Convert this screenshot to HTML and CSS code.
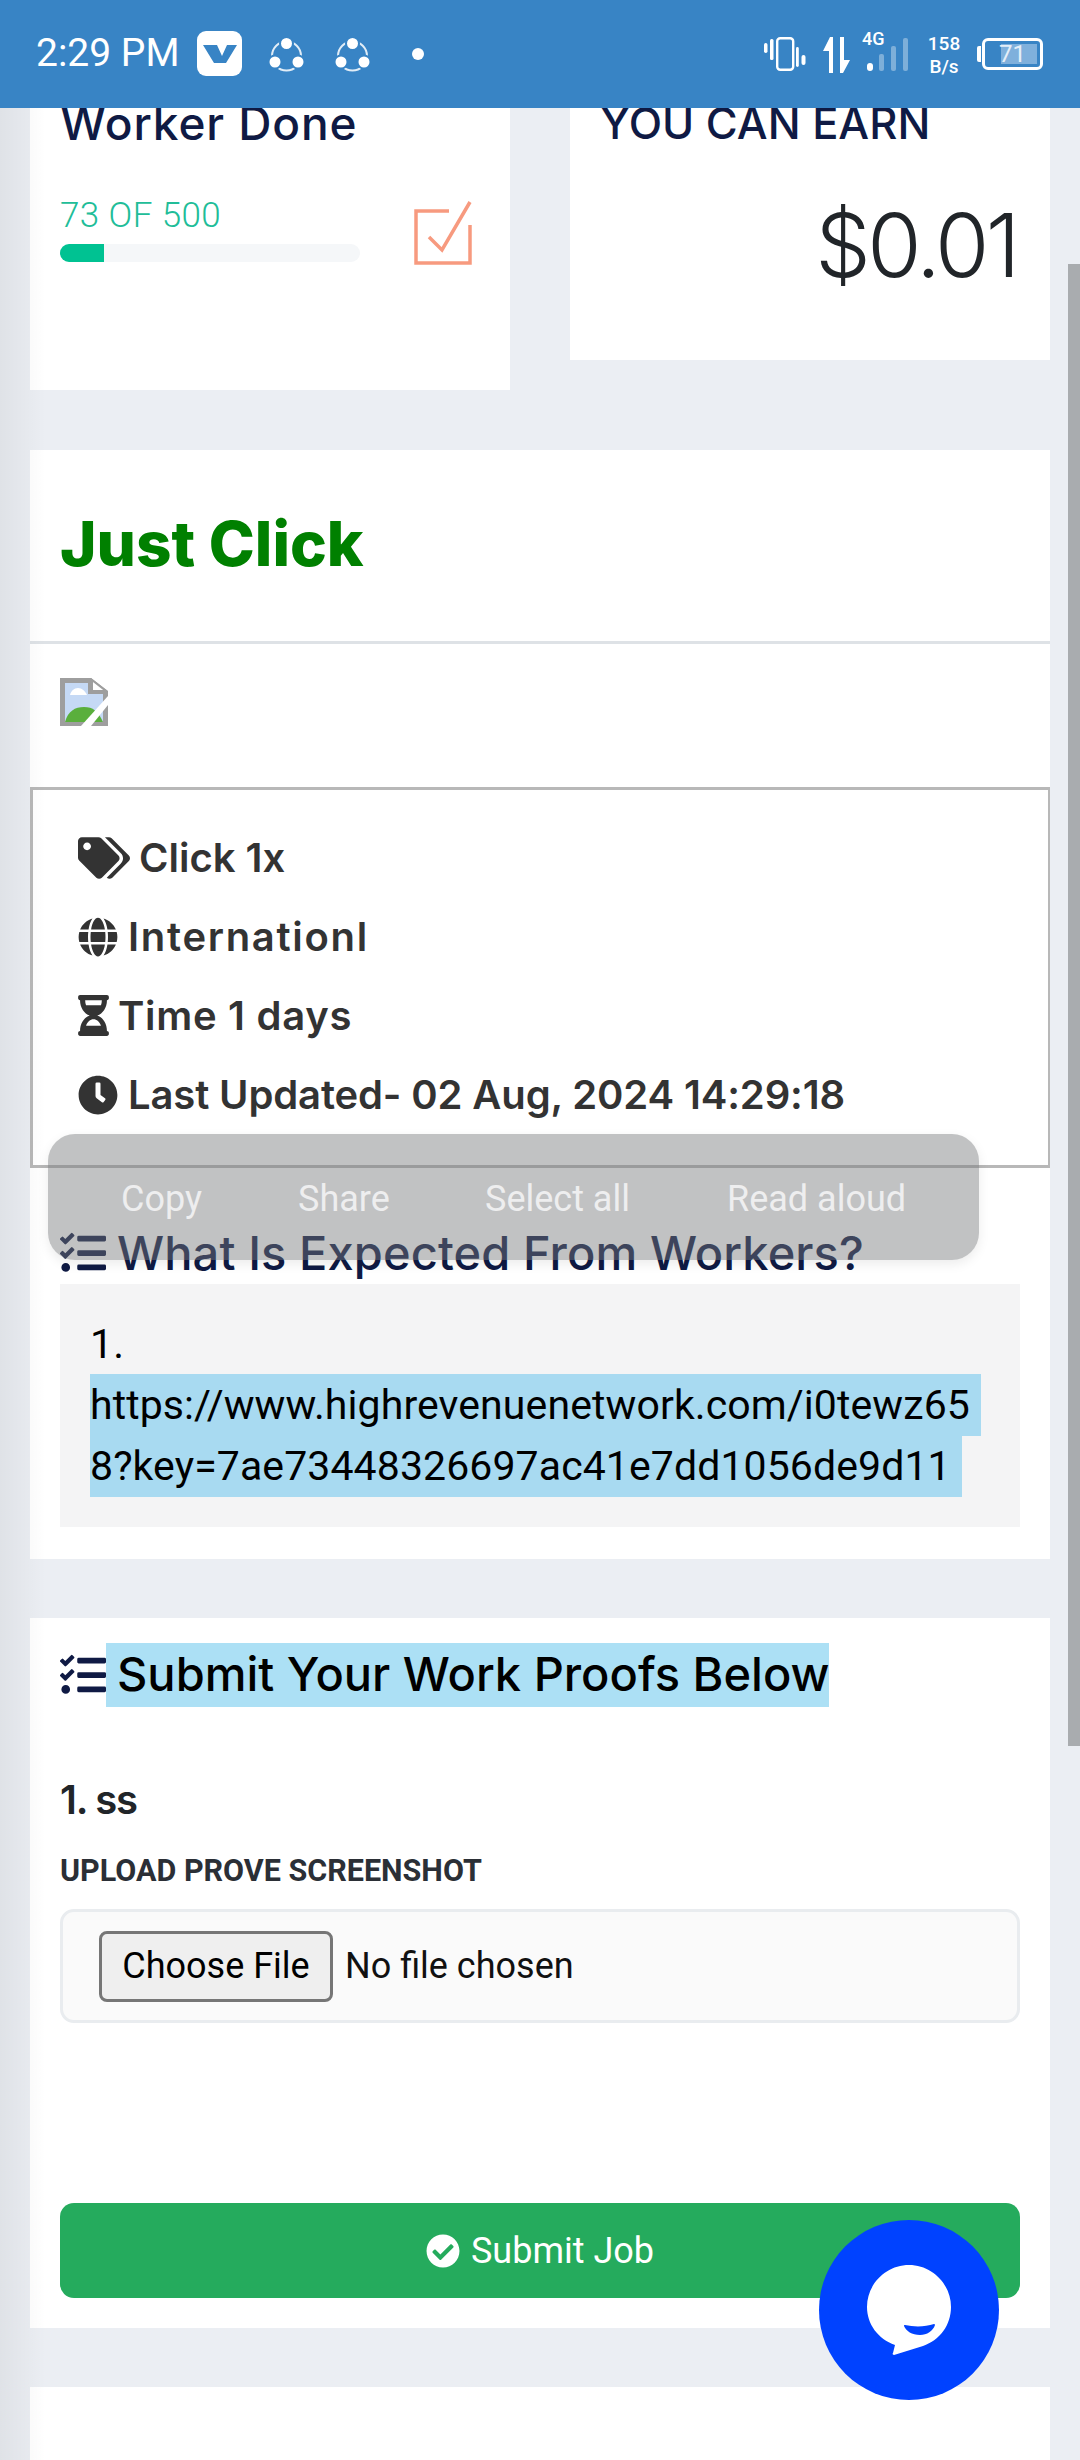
FILE: index.html
```html
<!DOCTYPE html>
<html lang="en">
<head>
  <meta charset="UTF-8" />
  <meta name="viewport" content="width=device-width, initial-scale=1.0" />
  <title>Job Details</title>
  <link rel="stylesheet" href="styles.css">
</head>
<body>
  <header class="status-bar">
    <div class="status-left">
      <span class="status-time">2:29 PM</span>
      <svg class="app-v" viewBox="0 0 45 45"><rect width="45" height="45" rx="9" fill="#fff"/><path d="M6 14H20L25 25L30 14H40L29 32H17Z" fill="#3884c5"/></svg>
      <svg class="app-share" viewBox="0 0 35 35"><circle cx="17.5" cy="19" r="14.5" fill="none" stroke="#fff" stroke-width="2" opacity=".85"/><g fill="#fff" stroke="#3884c5" stroke-width="2"><circle cx="17.5" cy="6.5" r="6.5"/><circle cx="6" cy="25" r="6.5"/><circle cx="29" cy="25" r="6.5"/></g></svg>
      <svg class="app-share" viewBox="0 0 35 35"><circle cx="17.5" cy="19" r="14.5" fill="none" stroke="#fff" stroke-width="2" opacity=".85"/><g fill="#fff" stroke="#3884c5" stroke-width="2"><circle cx="17.5" cy="6.5" r="6.5"/><circle cx="6" cy="25" r="6.5"/><circle cx="29" cy="25" r="6.5"/></g></svg>
      <span class="status-dot"></span>
    </div>
    <div class="status-right">
      <svg class="ic-vibrate" viewBox="0 0 42 34"><rect x="13.2" y="1.2" width="16" height="31.6" rx="3" fill="none" stroke="#fff" stroke-width="2.4"/><rect x="0" y="6" width="3.5" height="10" rx="1.7" fill="#fff"/><rect x="6" y="2" width="3.5" height="21" rx="1.5" fill="#fff"/><rect x="32" y="10" width="2.8" height="20" rx="1.4" fill="#fff"/><rect x="37.5" y="18" width="4" height="10" rx="2" fill="#fff"/></svg>
      <svg class="ic-arrows" viewBox="0 0 27 36"><path d="M0 14L7 0H10V36H6V14Z" fill="#fff"/><path d="M17 0H21V23H27L20 36H17Z" fill="#fff"/></svg>
      <div class="signal">
        <span class="signal-net">4G</span>
        <svg class="signal-bars" viewBox="0 0 46 33"><rect x="1" y="25" width="6" height="8" rx="3" fill="#fff"/><g fill="#fff" opacity=".35"><rect x="13" y="16" width="5" height="17" rx="2"/><rect x="25" y="8" width="5" height="25" rx="2"/><rect x="37" y="0" width="5" height="33" rx="2"/></g></svg>
      </div>
      <div class="net-speed"><span>158</span><span>B/s</span></div>
      <div class="battery">
        <span class="battery-nub"></span>
        <div class="battery-body"><span class="battery-fill"></span><span class="battery-num">71</span></div>
      </div>
    </div>
  </header>

  <main class="page">
    <section class="stats">
      <div class="card stat-card stat-left">
        <h5 class="stat-title worker-title">Worker Done</h5>
        <div class="done-row">
          <div class="done-info">
            <div class="done-count">73 OF 500</div>
            <div class="progress"><div class="progress-bar" style="width: 14.6%"></div></div>
          </div>
          <svg class="ic-done" viewBox="0 0 58 64"><path d="M35 10H2V62H56V24" fill="none" stroke="#f79a7f" stroke-width="3.5"/><path d="M15 36L28 49L56 1" fill="none" stroke="#f79a7f" stroke-width="3.5"/></svg>
        </div>
      </div>
      <div class="card stat-card stat-right">
        <h5 class="stat-title earn-title">YOU CAN EARN</h5>
        <div class="earn">$0.01</div>
      </div>
    </section>

    <section class="card job">
      <h2 class="job-title">Just Click</h2>
      <div class="job-thumb">
        <svg class="broken-img" viewBox="0 0 48 48"><path d="M0 0H31L48 13V48H0Z" fill="#9e9e9e"/><path d="M5 5H28V16H43V44H5Z" fill="#c5d9f5"/><path d="M10 17c1-4 4-7 8-7s7 3 9 7Z" fill="#fff"/><path d="M5 44C8 33 15 29 24 29S38 33 43 44Z" fill="#5aaf3c"/><path d="M21 48L48 18V27L31 48Z" fill="#fff"/><path d="M32 2L46 13H32Z" fill="#fff" stroke="#9e9e9e" stroke-width="2"/></svg>
      </div>
      <ul class="job-meta">
        <li><svg class="ic-tags" viewBox="0 0 640 512"><path d="M497.941 225.941L286.059 14.059A48 48 0 0 0 252.118 0H48C21.49 0 0 21.49 0 48v204.118a48 48 0 0 0 14.059 33.941l211.882 211.882c18.744 18.745 49.136 18.746 67.882 0l204.118-204.118c18.745-18.745 18.745-49.137 0-67.882zM112 160c-26.51 0-48-21.49-48-48s21.49-48 48-48 48 21.49 48 48-21.49 48-48 48zm513.941 133.823L421.823 497.941c-18.745 18.745-49.137 18.745-67.882 0l-.36-.36L527.64 323.522c16.999-16.999 26.36-39.6 26.36-63.64s-9.362-46.641-26.36-63.64L331.397 0h48.721a48 48 0 0 1 33.941 14.059l211.882 211.882c18.745 18.745 18.745 49.137 0 67.882z"/></svg><span class="meta-click">Click 1x</span></li>
        <li><svg class="ic-round" viewBox="0 0 496 512"><path d="M336.5 160C322 70.7 287.8 8 248 8s-74 62.7-88.5 152h177zM152 256c0 22.2 1.2 43.5 3.3 64h185.3c2.1-20.5 3.3-41.8 3.3-64s-1.2-43.5-3.3-64H155.3c-2.1 20.5-3.3 41.8-3.3 64zm324.7-96c-28.6-67.9-86.5-120.4-158-141.6 24.4 33.8 41.2 84.7 50 141.6h108zM177.2 18.4C105.8 39.6 47.8 92.1 19.3 160h108c8.7-56.9 25.5-107.8 49.9-141.6zM487.4 192H372.7c2.1 21 3.3 42.5 3.3 64s-1.2 43-3.3 64h114.6c5.5-20.5 8.6-41.8 8.6-64s-3.1-43.5-8.5-64zM120 256c0-21.5 1.2-43 3.3-64H8.6C3.2 212.5 0 233.8 0 256s3.2 43.5 8.6 64h114.6c-2-21-3.2-42.5-3.2-64zm39.5 96c14.5 89.3 48.7 152 88.5 152s74-62.7 88.5-152h-177zm159.3 141.6c71.4-21.2 129.4-73.7 158-141.6h-108c-8.8 56.9-25.6 107.8-50 141.6zM19.3 352c28.6 67.9 86.5 120.4 158 141.6-24.4-33.8-41.2-84.7-50-141.6h-108z"/></svg><span class="meta-intl">Internationl</span></li>
        <li><svg class="ic-hourglass" viewBox="0 0 384 512"><path d="M360 0H24C10.745 0 0 10.745 0 24v16c0 13.255 10.745 24 24 24 0 90.965 51.016 167.734 120.842 192C75.016 280.266 24 357.035 24 448c-13.255 0-24 10.745-24 24v16c0 13.255 10.745 24 24 24h336c13.255 0 24-10.745 24-24v-16c0-13.255-10.745-24-24-24 0-90.965-51.016-167.734-120.842-192C308.984 231.734 360 154.965 360 64c13.255 0 24-10.745 24-24V24c0-13.255-10.745-24-24-24zm-75.078 384H99.08c17.059-46.797 52.096-80 92.92-80 40.821 0 75.862 33.196 92.922 80zm.019-256H99.078C91.988 108.548 88 86.748 88 64h208c0 22.805-3.987 44.587-11.059 64z"/></svg><span class="meta-time">Time 1 days</span></li>
        <li><svg class="ic-round" viewBox="0 0 512 512"><path d="M256,8C119,8,8,119,8,256S119,504,256,504,504,393,504,256,393,8,256,8Zm92.49,313h0l-20,25a16,16,0,0,1-22.49,2.5h0l-67-49.72a40,40,0,0,1-15-31.23V112a16,16,0,0,1,16-16h32a16,16,0,0,1,16,16V256l58,42.5A16,16,0,0,1,348.49,321Z"/></svg><span class="meta-updated">Last Updated- 02 Aug, 2024 14:29:18</span></li>
      </ul>
      <h3 class="section-title expected">
        <svg class="ic-tasks" viewBox="0 0 512 512"><path d="M139.61 35.5a12 12 0 0 0-17 0L58.93 98.81l-22.7-22.12a12 12 0 0 0-17 0L3.53 92.41a12 12 0 0 0 0 17l47.59 47.4a12.78 12.78 0 0 0 17.61 0l15.59-15.62L156.52 69a12.09 12.09 0 0 0 .09-17zm0 159.19a12 12 0 0 0-17 0l-63.68 63.72-22.7-22.1a12 12 0 0 0-17 0L3.53 252a12 12 0 0 0 0 17L51 316.5a12.77 12.77 0 0 0 17.6 0l15.7-15.69 72.2-72.22a12 12 0 0 0 .09-16.9zM64 368c-26.49 0-48.59 21.5-48.59 48S37.53 464 64 464a48 48 0 0 0 0-96zm432 16H208a16 16 0 0 0-16 16v32a16 16 0 0 0 16 16h288a16 16 0 0 0 16-16v-32a16 16 0 0 0-16-16zm0-320H208a16 16 0 0 0-16 16v32a16 16 0 0 0 16 16h288a16 16 0 0 0 16-16V80a16 16 0 0 0-16-16zm0 160H208a16 16 0 0 0-16 16v32a16 16 0 0 0 16 16h288a16 16 0 0 0 16-16v-32a16 16 0 0 0-16-16z"/></svg>
        <span class="expected-text">What Is Expected From Workers?</span>
      </h3>
      <div class="steps">
        <div class="steps-num">1.</div>
        <div class="steps-url"><span class="selected">https://www.highrevenuenetwork.com/i0tewz65<br>8?key=7ae73448326697ac41e7dd1056de9d11</span></div>
      </div>
    </section>

    <section class="card proofs">
      <h3 class="section-title proofs-title">
        <svg class="ic-tasks" viewBox="0 0 512 512"><path d="M139.61 35.5a12 12 0 0 0-17 0L58.93 98.81l-22.7-22.12a12 12 0 0 0-17 0L3.53 92.41a12 12 0 0 0 0 17l47.59 47.4a12.78 12.78 0 0 0 17.61 0l15.59-15.62L156.52 69a12.09 12.09 0 0 0 .09-17zm0 159.19a12 12 0 0 0-17 0l-63.68 63.72-22.7-22.1a12 12 0 0 0-17 0L3.53 252a12 12 0 0 0 0 17L51 316.5a12.77 12.77 0 0 0 17.6 0l15.7-15.69 72.2-72.22a12 12 0 0 0 .09-16.9zM64 368c-26.49 0-48.59 21.5-48.59 48S37.53 464 64 464a48 48 0 0 0 0-96zm432 16H208a16 16 0 0 0-16 16v32a16 16 0 0 0 16 16h288a16 16 0 0 0 16-16v-32a16 16 0 0 0-16-16zm0-320H208a16 16 0 0 0-16 16v32a16 16 0 0 0 16 16h288a16 16 0 0 0 16-16V80a16 16 0 0 0-16-16zm0 160H208a16 16 0 0 0-16 16v32a16 16 0 0 0 16 16h288a16 16 0 0 0 16-16v-32a16 16 0 0 0-16-16z"/></svg>
        <span class="proofs-text">Submit Your Work Proofs Below</span>
      </h3>
      <h4 class="proof-num">1. ss</h4>
      <label class="proof-label">UPLOAD PROVE SCREENSHOT</label>
      <div class="file-box">
        <span class="file-btn">Choose File</span>
        <span class="file-name">No file chosen</span>
      </div>
      <button class="submit-btn">
        <svg class="ic-check" viewBox="0 0 512 512"><path d="M504 256c0 136.967-111.033 248-248 248S8 392.967 8 256 119.033 8 256 8s248 111.033 248 248zM227.314 387.314l184-184c6.248-6.248 6.248-16.379 0-22.627l-22.627-22.627c-6.248-6.249-16.379-6.249-22.628 0L216 308.118l-70.059-70.059c-6.248-6.248-16.379-6.248-22.628 0l-22.627 22.627c-6.248 6.248-6.248 16.379 0 22.627l104 104c6.249 6.249 16.379 6.249 22.628.001z"/></svg>
        Submit Job
      </button>
    </section>

    <section class="card next-card"></section>
  </main>

  <!-- things floating over the page -->
  <div class="edge-shade"></div>
  <div class="scroll-thumb"></div>
  <div class="text-toolbar">
    <span class="tb-copy">Copy</span>
    <span class="tb-share">Share</span>
    <span class="tb-select">Select all</span>
    <span class="tb-read">Read aloud</span>
  </div>
  <svg class="chat-fab" viewBox="0 0 180 180">
    <circle cx="90" cy="90" r="90" fill="#0042ff"/>
    <path d="M90 45c23 0 42 19 42 42 0 18-11 33-28 39l-29 9c-1 0-2-1-1-2l2-8c-17-6-28-21-28-38 0-23 19-42 42-42z" fill="#fff"/>
    <path d="M86 105c9 2 20 2 29-1 1 0 1 1 1 1-2 6-8 10-15 10-8 0-14-4-16-9 0-1 0-1 1-1z" fill="#0042ff"/>
  </svg>
</body>
</html>
```

FILE: styles.css
```css
* {
  box-sizing: border-box;
}

body {
  margin: 0;
  width: 1080px;
  height: 2460px;
  overflow: hidden;
  position: relative;
  background-color: #ebeef3;
  font-family: "Roboto", sans-serif;
  color: #212529;
}

h2, h3, h4, h5, ul {
  margin: 0;
  padding: 0;
}

/* status bar */
.status-bar {
  position: relative;
  z-index: 3;
  height: 108px;
  background-color: #3884c5;
  display: flex;
  justify-content: space-between;
  color: #fff;
}

.status-left {
  display: flex;
  align-items: flex-start;
  padding: 31px 0 0 36px;
}

.status-time {
  font-size: 39px;
  line-height: 45px;
  width: 161px;
}

.app-v {
  width: 45px;
  height: 45px;
  margin-right: 27px;
}

.app-share {
  width: 35px;
  height: 35px;
  margin: 6px 31px 0 0;
}

.status-dot {
  width: 12px;
  height: 12px;
  margin: 17px 0 0 11px;
  border-radius: 50%;
  background-color: #fff;
}

.status-right {
  display: flex;
  align-items: flex-start;
  padding: 32px 37px 0 0;
}

.ic-vibrate {
  width: 42px;
  height: 34px;
  margin: 5px 17px 0 0;
}

.ic-arrows {
  width: 27px;
  height: 36px;
  margin: 5px 10px 0 0;
}

.signal {
  position: relative;
  width: 66px;
  height: 40px;
}

.signal-net {
  position: absolute;
  left: 2px;
  top: -3px;
  font-size: 18px;
  line-height: 20px;
  font-weight: 500;
}

.signal-bars {
  position: absolute;
  left: 6px;
  top: 6px;
  width: 46px;
  height: 33px;
}

.net-speed {
  display: flex;
  flex-direction: column;
  align-items: center;
  width: 36px;
  margin-right: 15px;
  font-size: 19px;
  line-height: 23px;
  font-weight: 500;
}

.battery {
  display: flex;
  align-items: center;
  height: 32px;
  margin-top: 6px;
}

.battery-nub {
  width: 4px;
  height: 16px;
  margin-right: 1px;
  background-color: #fff;
  border-radius: 2px 0 0 2px;
}

.battery-body {
  position: relative;
  width: 61px;
  height: 32px;
  border: 3px solid #fff;
  border-radius: 6px;
}

.battery-fill {
  position: absolute;
  left: 16px;
  top: 3px;
  right: 3px;
  bottom: 3px;
  background-color: #7fb0dc;
}

.battery-num {
  position: absolute;
  left: 0;
  right: 0;
  top: 0;
  text-align: center;
  font-size: 24px;
  line-height: 26px;
  color: #e4eef8;
}

/* page */
.page {
  width: 1020px;
  margin-left: 30px;
  display: flex;
  flex-direction: column;
  gap: 59px;
}

.card {
  background-color: #fff;
}

.stats {
  display: flex;
  justify-content: space-between;
  align-items: flex-start;
  margin-top: -40px;
  margin-bottom: 1px;
}

.stat-card {
  width: 480px;
  padding: 0 30px;
}

.stat-left {
  height: 322px;
}

.stat-right {
  height: 292px;
}

.stat-title {
  font-family: "Inter", sans-serif;
  font-weight: 500;
  font-size: 44px;
  line-height: 110px;
  color: #0f1a44;
  white-space: nowrap;
}

.worker-title {
  font-size: 46px;
  letter-spacing: 0.9px;
}

.earn-title {
  font-size: 43.5px;
}

.done-row {
  display: flex;
  justify-content: space-between;
  margin-top: 18px;
}

.done-info {
  width: 300px;
}

.done-count {
  font-weight: 300;
  font-size: 35px;
  letter-spacing: 0.4px;
  line-height: 40px;
  color: #21bd98;
}

.progress {
  height: 18px;
  margin-top: 8px;
  border-radius: 9px;
  background-color: #f5f7f9;
  overflow: hidden;
}

.progress-bar {
  height: 100%;
  background-color: #00c292;
}

.ic-done {
  width: 58px;
  height: 64px;
  margin: 5px 8px 0 0;
}

.earn {
  font-family: "Inter", sans-serif;
  font-weight: 300;
  font-size: 88px;
  line-height: 100px;
  text-align: right;
  margin-top: 17px;
  padding-right: 3px;
  letter-spacing: -3.5px;
}

/* job card */
.job {
  display: flex;
  flex-direction: column;
  height: 1109px;
}

.job-title {
  height: 194px;
  padding: 59px 30px 0;
  border-bottom: 3px solid #dee2e6;
  font-family: "Inter", sans-serif;
  font-weight: 800;
  font-size: 62px;
  line-height: 70px;
  color: #008000;
}

.job-thumb {
  height: 143px;
  padding: 34px 30px 0;
}

.broken-img {
  display: block;
  width: 48px;
  height: 48px;
}

.job-meta {
  list-style: none;
  height: 381px;
  padding: 28px 0 0 45px;
  border: 3px solid #b8b8b8;
  border-right-width: 2px;
}

.job-meta li {
  display: flex;
  align-items: center;
  height: 79px;
  font-family: "Inter", sans-serif;
  font-weight: 600;
  font-size: 40px;
  color: #333;
  white-space: nowrap;
}

.meta-intl {
  letter-spacing: 1.7px;
}

.meta-time {
  letter-spacing: 0.7px;
}

.meta-updated {
  letter-spacing: -0.13px;
}

.job-meta svg {
  fill: #333;
  flex: none;
}

.ic-tags {
  width: 52px;
  height: 42px;
  margin-right: 9px;
}

.ic-round {
  width: 40px;
  height: 40px;
  margin-right: 10px;
}

.ic-hourglass {
  width: 31px;
  height: 41px;
  margin-right: 9px;
}

.section-title {
  display: flex;
  align-items: center;
  font-family: "Inter", sans-serif;
  font-weight: 500;
  font-size: 47px;
  white-space: nowrap;
}

.ic-tasks {
  width: 46px;
  height: 46px;
  flex: none;
  fill: #0f1a44;
}

.expected {
  height: 65px;
  padding-top: 2px;
  margin: 51px 0 0 30px;
  color: #0f1a44;
}

.expected-text {
  margin-left: 11px;
  letter-spacing: 0.1px;
}

.steps {
  width: 960px;
  height: 243px;
  margin: 0 0 0 30px;
  padding: 30px 30px 0;
  background-color: #f4f4f5;
  font-size: 41px;
  letter-spacing: 0.1px;
  color: #000;
}

.steps-num {
  height: 61px;
  line-height: 61px;
}

.steps-url {
  line-height: 61px;
  white-space: nowrap;
}

.selected {
  background-color: #a8daf1;
  padding: 7px 11px 7px 0;
  -webkit-box-decoration-break: clone;
  box-decoration-break: clone;
}

/* proofs card */
.proofs {
  height: 710px;
  padding: 25px 30px 0;
}

.proofs-title {
  height: 64px;
  color: #000;
}

.proofs-text {
  display: block;
  height: 64px;
  line-height: 62px;
  padding-left: 11px;
  margin-left: 0;
  background-color: #ace0f5;
}

.proof-num {
  margin-top: 63px;
  font-family: "Inter", sans-serif;
  font-weight: 600;
  font-size: 40px;
  letter-spacing: -1.2px;
  line-height: 60px;
}

.proof-label {
  display: block;
  margin-top: 21px;
  font-weight: 700;
  font-size: 30.5px;
  line-height: 40px;
  color: #2b2f36;
}

.file-box {
  display: flex;
  align-items: center;
  height: 114px;
  margin-top: 18px;
  padding: 0 36px;
  background-color: #fafafa;
  border: 3px solid #e9ecef;
  border-radius: 14px;
  font-size: 36px;
  color: #111;
}

.file-btn {
  display: flex;
  align-items: center;
  justify-content: center;
  width: 234px;
  height: 71px;
  margin-right: 12px;
  background-color: #efefef;
  border: 3px solid #767676;
  border-radius: 8px;
  color: #000;
}

.submit-btn {
  display: flex;
  align-items: center;
  justify-content: center;
  gap: 11px;
  width: 960px;
  height: 95px;
  margin-top: 180px;
  border: none;
  border-radius: 14px;
  background-color: #25ab5d;
  font-family: "Roboto", sans-serif;
  font-weight: 400;
  font-size: 36px;
  color: #fff;
}

.ic-check {
  width: 34px;
  height: 34px;
  fill: #fff;
}

.next-card {
  height: 120px;
}

/* overlays */
.edge-shade {
  position: absolute;
  left: 0;
  top: 108px;
  bottom: 0;
  width: 46px;
  background: linear-gradient(to right, rgba(0, 0, 0, 0.05), rgba(0, 0, 0, 0));
  pointer-events: none;
}

.scroll-thumb {
  position: absolute;
  left: 1068px;
  top: 264px;
  width: 12px;
  height: 1482px;
  background-color: #a9acaf;
}

.text-toolbar {
  position: absolute;
  left: 48px;
  top: 1134px;
  width: 931px;
  height: 126px;
  border-radius: 27px;
  background-color: rgba(118, 119, 123, 0.45);
  box-shadow: 0 4px 12px rgba(0, 0, 0, 0.08);
  font-size: 36px;
  color: #eeeeef;
}

.text-toolbar span {
  position: absolute;
  top: 43px;
  line-height: 44px;
}

.tb-copy { left: 73px; }
.tb-share { left: 250px; }
.tb-select { left: 437px; }
.tb-read { left: 679px; }

.chat-fab {
  position: absolute;
  left: 819px;
  top: 2220px;
  width: 180px;
  height: 180px;
}
```
